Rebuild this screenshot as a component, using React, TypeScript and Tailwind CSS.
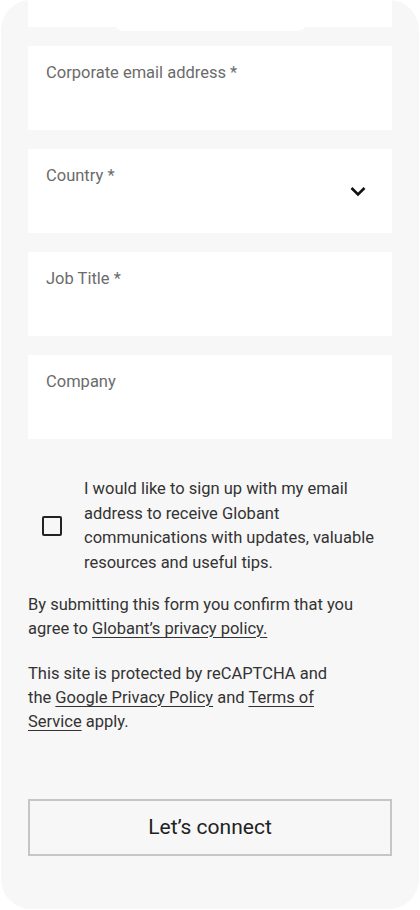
import React from 'react';

function Field({ label, select }: { label: string; select?: boolean }) {
  return (
    <div className="relative h-[84px] bg-white px-[18px] pt-[15px]">
      <span className="block text-[16.5px] leading-[24px] text-[#6b6b6b]">{label}</span>
      {select && (
        <svg
          className="absolute right-[25px] top-[35px] h-[14px] w-[18px]"
          viewBox="0 0 18 14"
          fill="none"
          stroke="#111"
          strokeWidth="2.6"
        >
          <path d="M2.5 4 L9 10.5 L15.5 4" />
        </svg>
      )}
    </div>
  );
}

export default function App() {
  return (
    <div className="h-[910px] overflow-hidden bg-white font-['Roboto',sans-serif]">
      <div className="mx-[1px] h-[909px] rounded-[30px] bg-[#f7f7f7] px-[27px]">
        {/* top field, scrolled mostly out of view */}
        <div className="relative h-[27px] bg-white">
          <div className="absolute left-[85px] top-[20px] h-[11px] w-[195px] rounded-b-[12px] bg-white" />
        </div>

        <div className="mt-[19px] flex flex-col gap-[19px]">
          <Field label="Corporate email address *" />
          <Field label="Country *" select />
          <Field label="Job Title *" />
          <Field label="Company" />
        </div>

        {/* newsletter opt-in */}
        <div className="mt-[38px] flex items-center gap-[22px] pl-[14px]">
          <span className="h-[20px] w-[20px] shrink-0 rounded-[2px] border-2 border-[#222]" />
          <p className="text-[16.5px] leading-[24.5px] text-[#333]">
            I would like to sign up with my email address to receive Globant communications with updates, valuable
            resources and useful tips.
          </p>
        </div>

        <p className="mt-[18px] text-[16.5px] leading-[24px] text-[#333]">
          By submitting this form you confirm that you agree to{' '}
          <a className="underline underline-offset-[3px]">Globant’s privacy policy.</a>
        </p>
        <p className="mt-[21px] pr-[50px] text-[16.5px] leading-[24px] text-[#333]">
          This site is protected by reCAPTCHA and the{' '}
          <a className="underline underline-offset-[3px]">Google Privacy Policy</a> and{' '}
          <a className="underline underline-offset-[3px]">Terms of Service</a> apply.
        </p>

        <button className="mt-[65px] flex h-[57px] w-full items-center justify-center border-2 border-[#c6c6c6] text-[21px] text-[#222]">
          Let’s connect
        </button>
      </div>
    </div>
  );
}
